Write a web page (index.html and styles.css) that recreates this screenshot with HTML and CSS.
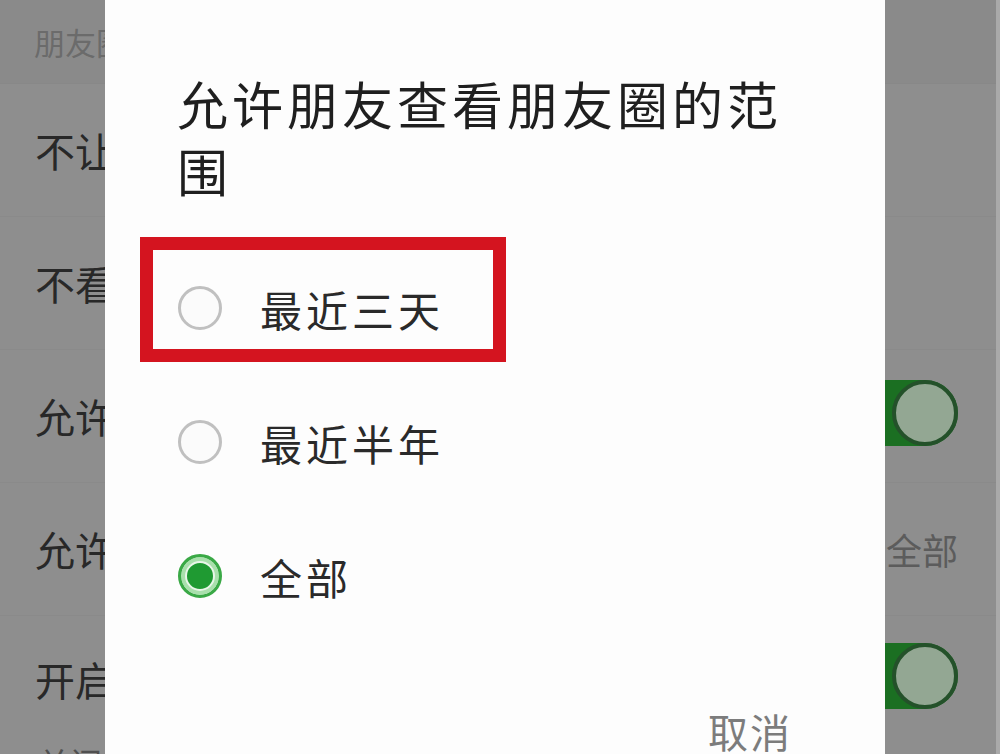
FILE: index.html
```html
<!DOCTYPE html>
<html lang="zh-CN">
<head>
<meta charset="utf-8">
<title>朋友圈设置</title>
<link rel="stylesheet" href="styles.css">
</head>
<body>
<div class="screen">
  <div class="settings">
    <div class="section-title">朋友圈</div>
    <div class="row"><span class="label">不让他(她)看</span></div>
    <div class="row"><span class="label">不看他(她)</span></div>
    <div class="row"><span class="label">允许陌生人查看十条朋友圈</span><span class="toggle"><span class="knob"></span></span></div>
    <div class="row"><span class="label">允许朋友查看朋友圈的范围</span><span class="value">全部</span></div>
    <div class="row row-last"><span class="label">开启朋友圈入口</span><span class="toggle"><span class="knob"></span></span></div>
    <p class="desc">关闭后，朋友圈入口将被隐藏，朋友圈更新提醒也将关闭</p>
  </div>
  <div class="scroll-edge"></div>

  <div class="dialog">
    <h2 class="title">允许朋友查看朋友圈的范围</h2>
    <ul class="options">
      <li class="option"><span class="radio"></span><span class="option-text">最近三天</span></li>
      <li class="option"><span class="radio"></span><span class="option-text">最近半年</span></li>
      <li class="option"><span class="radio checked"></span><span class="option-text">全部</span></li>
    </ul>
    <div class="actions"><button class="cancel">取消</button></div>
    <div class="highlight"></div>
  </div>
</div>
</body>
</html>
```

FILE: styles.css
```css
* { box-sizing: border-box; }
html, body {
  margin: 0;
  padding: 0;
}
body {
  width: 1000px;
  height: 754px;
  overflow: hidden;
  font-family: "Noto Sans CJK SC", "Noto Sans", sans-serif;
  background: #8e8e8e;
}
.screen {
  position: relative;
  width: 1000px;
  height: 754px;
  overflow: hidden;
}

/* dimmed settings list behind */
.settings {
  display: flex;
  flex-direction: column;
}
.section-title {
  height: 84px;
  padding-left: 34px;
  display: flex;
  align-items: center;
  font-size: 31px;
  color: #6b6b6b;
  background: #8a8a8a;
  border-bottom: 1px solid #888888;
}
.row {
  height: 133px;
  flex: none;
  display: flex;
  align-items: center;
  padding: 0 42px 0 35px;
  border-bottom: 1px solid #8a8a8a;
  gap: 20px;
}
.row-last {
  height: 126px;
  border-bottom: 0;
}
.label {
  flex: 1;
  min-width: 0;
  white-space: nowrap;
  overflow: hidden;
  font-size: 40px;
  color: #282828;
}
.value {
  font-size: 36px;
  color: #5c5c5c;
  white-space: nowrap;
}
.toggle {
  flex: none;
  width: 120px;
  height: 66px;
  border-radius: 33px;
  background: #1b6f22;
  display: flex;
  justify-content: flex-end;
  margin-top: -6px;
}
.knob {
  width: 66px;
  height: 66px;
  border-radius: 50%;
  background: #93a793;
  border: 4px solid #24512a;
}
.desc {
  margin: 0;
  padding: 0 42px 0 38px;
  font-size: 32px;
  line-height: 40px;
  color: #505050;
  white-space: nowrap;
}
.scroll-edge {
  position: absolute;
  top: 0;
  right: 0;
  width: 4px;
  height: 100%;
  background: #a9a9a9;
}

/* dialog */
.dialog {
  position: absolute;
  left: 105px;
  top: 0;
  width: 780px;
  height: 800px;
  background: #fdfdfd;
  padding: 70px 93px 0 72px;
}
.title {
  margin: 0;
  max-width: 625px;
  font-size: 51px;
  font-weight: 400;
  line-height: 67px;
  letter-spacing: 4px;
  color: #1f1f1f;
}
.options {
  list-style: none;
  margin: 37px 0 0;
  padding: 0;
}
.option {
  height: 134px;
  display: flex;
  align-items: center;
}
.radio {
  flex: none;
  width: 44px;
  height: 44px;
  margin-left: 1px;
  border-radius: 50%;
  border: 3px solid #c0c0c0;
  background: #fbfbfb;
}
.radio.checked {
  border: 3px solid #3aa946;
  background: #1f9a32;
  box-shadow: inset 0 0 0 4px #a9e0ac, inset 0 0 0 6px #e8f6e8;
}
.option-text {
  margin-left: 38px;
  font-size: 42px;
  letter-spacing: 4px;
  color: #2a2a2a;
}
.actions {
  display: flex;
  justify-content: flex-end;
  padding-top: 66px;
}
.cancel {
  border: 0;
  background: none;
  padding: 0;
  font-family: inherit;
  font-size: 40px;
  line-height: 44px;
  letter-spacing: 2px;
  color: #7c7c7c;
}
.highlight {
  position: absolute;
  left: 35px;
  top: 237px;
  width: 366px;
  height: 125px;
  border: 13px solid #d4141f;
}
```
